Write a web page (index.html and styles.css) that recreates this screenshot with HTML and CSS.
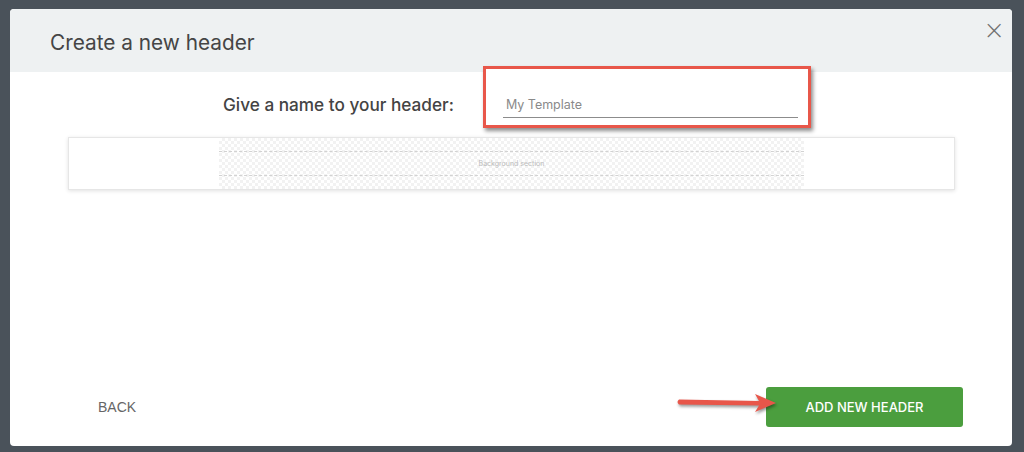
FILE: index.html
```html
<!DOCTYPE html>
<html lang="en">
<head>
    <meta charset="UTF-8">
    <meta name="viewport" content="width=device-width, initial-scale=1.0">
    <title>Create a new header</title>
    <link rel="stylesheet" href="styles.css">
</head>
<body>
    <div class="modal">
        <!-- 标题栏 -->
        <div class="modal-head">
            <h2>Create a new header</h2>
            <span class="close">&times;</span>
        </div>
        <div class="modal-body">
            <div class="name-row">
                <label class="name-label">Give a name to your header:</label>
                <div class="name-field">
                    <span class="placeholder">My Template</span>
                </div>
            </div>
            <!-- 预览区 -->
            <div class="preview">
                <div class="preview-inner">
                    <span class="preview-line"></span>
                    <span class="preview-text">Background section</span>
                    <span class="preview-line"></span>
                </div>
            </div>
        </div>
        <div class="modal-foot">
            <a href="#" class="back">BACK</a>
            <a href="#" class="add-btn">ADD NEW HEADER</a>
            <svg class="arrow" width="106" height="24" viewBox="0 0 106 24">
                <path d="M4 8.5 L84 10 L80 3 L101 12 L80 21 L84 14.5 L4 13.5 Q1 11 4 8.5 Z" fill="#e8564a"/>
            </svg>
        </div>
    </div>
</body>
</html>
```
FILE: styles.css
```css
* {
    margin: 0;
    padding: 0;
    box-sizing: border-box;
}
body {
    width: 1024px;
    height: 452px;
    background: #4a525a;
    padding: 9px 12px 6px 10px;
    font-family: Inter, "Open Sans", sans-serif;
    overflow: hidden;
}
.modal {
    height: 437px;
    background: #fff;
    border-radius: 4px;
    display: flex;
    flex-direction: column;
    position: relative;
}
.modal-head {
    height: 63px;
    background: #eef1f2;
    border-radius: 4px 4px 0 0;
    display: flex;
    align-items: center;
    justify-content: space-between;
    padding: 0 7px 0 40px;
}
.modal-head h2 {
    font-size: 20.8px;
    font-weight: 400;
    color: #454545;
    margin-top: 3px;
}
.close {
    font-size: 26px;
    line-height: 1;
    color: #707070;
    font-family: "DejaVu Sans", sans-serif;
    font-weight: 300;
    align-self: flex-start;
    margin-top: 8px;
}
.modal-body {
    flex: 1;
    padding: 0 57px 0 58px;
}
.name-row {
    display: flex;
    align-items: center;
    margin-top: -6px;
    padding-left: 155px;
}
.name-label {
    font-size: 17.2px;
    font-weight: 500;
    color: #444;
    margin-right: 29px;
    margin-top: 14px;
}
/* 红色标注框 */
.name-field {
    width: 328px;
    height: 62px;
    border: 3px solid #e8574a;
    box-shadow: 2px 3px 4px rgba(0, 0, 0, 0.45);
    padding: 0 10px 0 17px;
    display: flex;
    align-items: flex-end;
    background: #fff;
}
.placeholder {
    display: block;
    width: 100%;
    font-size: 12.5px;
    color: #8a8a8a;
    border-bottom: 1.5px solid #8c8c8c;
    padding: 0 0 5px 3px;
    margin-bottom: 7px;
}
.preview {
    margin-top: 9px;
    height: 53px;
    border: 1px solid #e6e6e6;
    box-shadow: 0 1px 4px rgba(0, 0, 0, 0.12);
    padding: 0 150px;
}
.preview-inner {
    height: 100%;
    background-color: #fff;
    background-image: conic-gradient(#f2f2f2 25%, #fff 0 50%, #f2f2f2 0 75%, #fff 0);
    background-size: 6px 6px;
    display: flex;
    flex-direction: column;
    justify-content: center;
    align-items: center;
}
.preview-line {
    display: block;
    width: 100%;
    border-top: 1px dashed #d2d2d2;
}
.preview-text {
    font-size: 7px;
    color: #bbb;
    line-height: 23px;
}
.modal-foot {
    display: flex;
    align-items: center;
    justify-content: space-between;
    padding: 0 49px 19px 88px;
    position: relative;
}
.back {
    font-family: "Liberation Sans", Arial, sans-serif;
    font-size: 14px;
    color: #666;
    text-decoration: none;
}
.add-btn {
    width: 197px;
    height: 40px;
    background: #4b9e3e;
    border-radius: 3px;
    color: #fff;
    font-size: 13px;
    font-weight: 500;
    text-decoration: none;
    display: flex;
    align-items: center;
    justify-content: center;
}
/* 箭头标注 */
.arrow {
    position: absolute;
    left: 665px;
    top: 4px;
    filter: drop-shadow(1px 2px 1.5px rgba(0, 0, 0, 0.4));
}
```
